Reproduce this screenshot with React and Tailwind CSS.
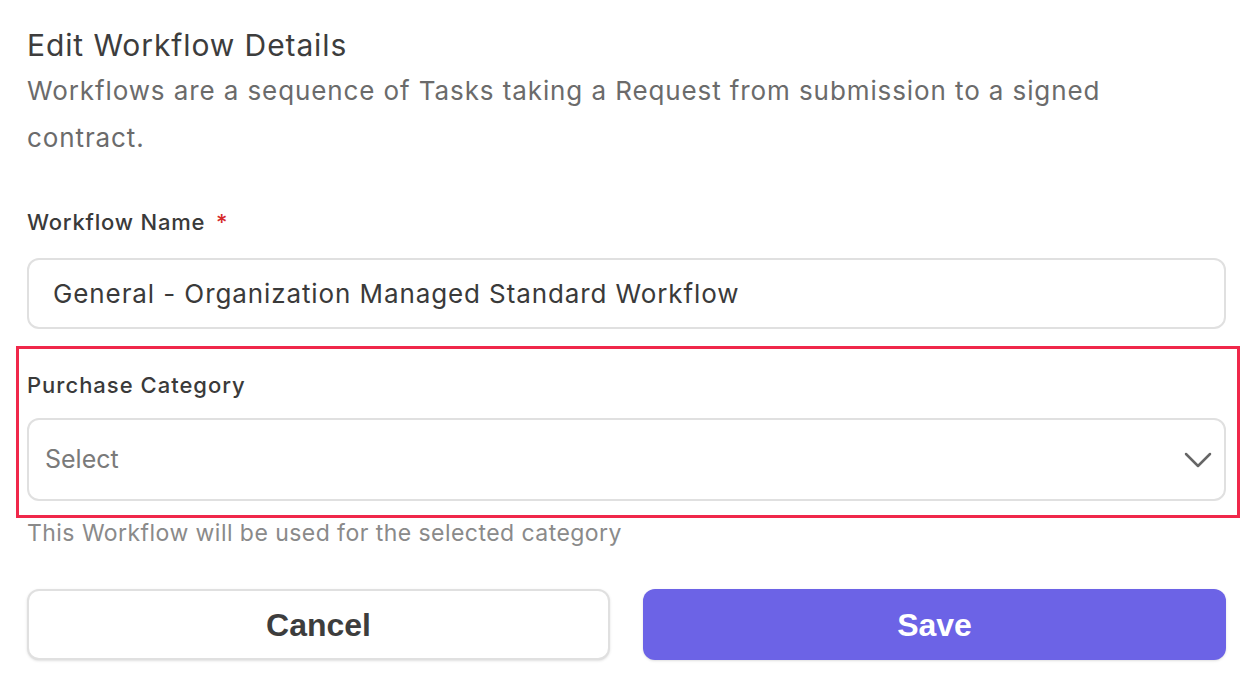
import React from "react";

function Chevron() {
  return (
    <svg width="28" height="16" viewBox="0 0 28 16" fill="none" className="text-[#666]">
      <path d="M2 2l12 12L26 2" stroke="currentColor" strokeWidth="2.5" strokeLinecap="round" strokeLinejoin="round" />
    </svg>
  );
}

export default function App() {
  return (
    <div className="min-h-[678px] w-[1240px] overflow-hidden bg-white pl-[27px] pr-[14px] pt-[25px] font-['Inter','Noto_Sans',sans-serif]">
      {/* Header */}
      <h2 className="text-[30px] leading-[40px] tracking-[0.9px] text-[#3d3d3d]">Edit Workflow Details</h2>
      <p className="mt-[2px] pr-[90px] text-[26px] leading-[47px] tracking-[0.9px] text-[#6b6b6b]">
        Workflows are a sequence of Tasks taking a Request from submission to a signed contract.
      </p>

      {/* Name */}
      <label className="mt-[46px] block text-[22px] leading-[30px] tracking-[0.8px] font-medium text-[#3a3a3a]">
        Workflow Name <span className="ml-[4px] text-[#d62a2a]">*</span>
      </label>
      <div className="mt-[21px] flex h-[71px] items-center rounded-[12px] border-2 border-[#e0e0e0] px-[24px]">
        <span className="text-[26px] tracking-[0.9px] text-[#3a3a3a]">General - Organization Managed Standard Workflow</span>
      </div>

      {/* Category (highlighted) */}
      <div className="mt-[17px] -ml-[11px] -mr-[14px] border-[3px] border-[#f0284a] pl-[8px] pr-[11px] pt-[21px] pb-[14px]">
        <label className="block text-[22px] leading-[30px] tracking-[1px] font-medium text-[#3a3a3a]">Purchase Category</label>
        <div className="mt-[18px] flex h-[83px] items-center justify-between rounded-[12px] border-2 border-[#e0e0e0] pl-[16px] pr-[12px]">
          <span className="text-[25px] text-[#7a7a7a]">Select</span>
          <Chevron />
        </div>
      </div>
      <p className="text-[23px] leading-[30px] tracking-[0.45px] text-[#8a8a8a]">This Workflow will be used for the selected category</p>

      {/* Actions */}
      <div className="mt-[41px] grid grid-cols-2 gap-[33px] font-['Liberation_Sans',Arial,sans-serif]">
        <button className="h-[71px] rounded-[12px] border-2 border-[#e0e0e0] bg-white text-[32px] font-bold text-[#3d3d3d] shadow-sm">
          Cancel
        </button>
        <button className="h-[71px] rounded-[12px] bg-[#6c63e6] text-[32px] font-bold text-white shadow-sm">
          Save
        </button>
      </div>
    </div>
  );
}
